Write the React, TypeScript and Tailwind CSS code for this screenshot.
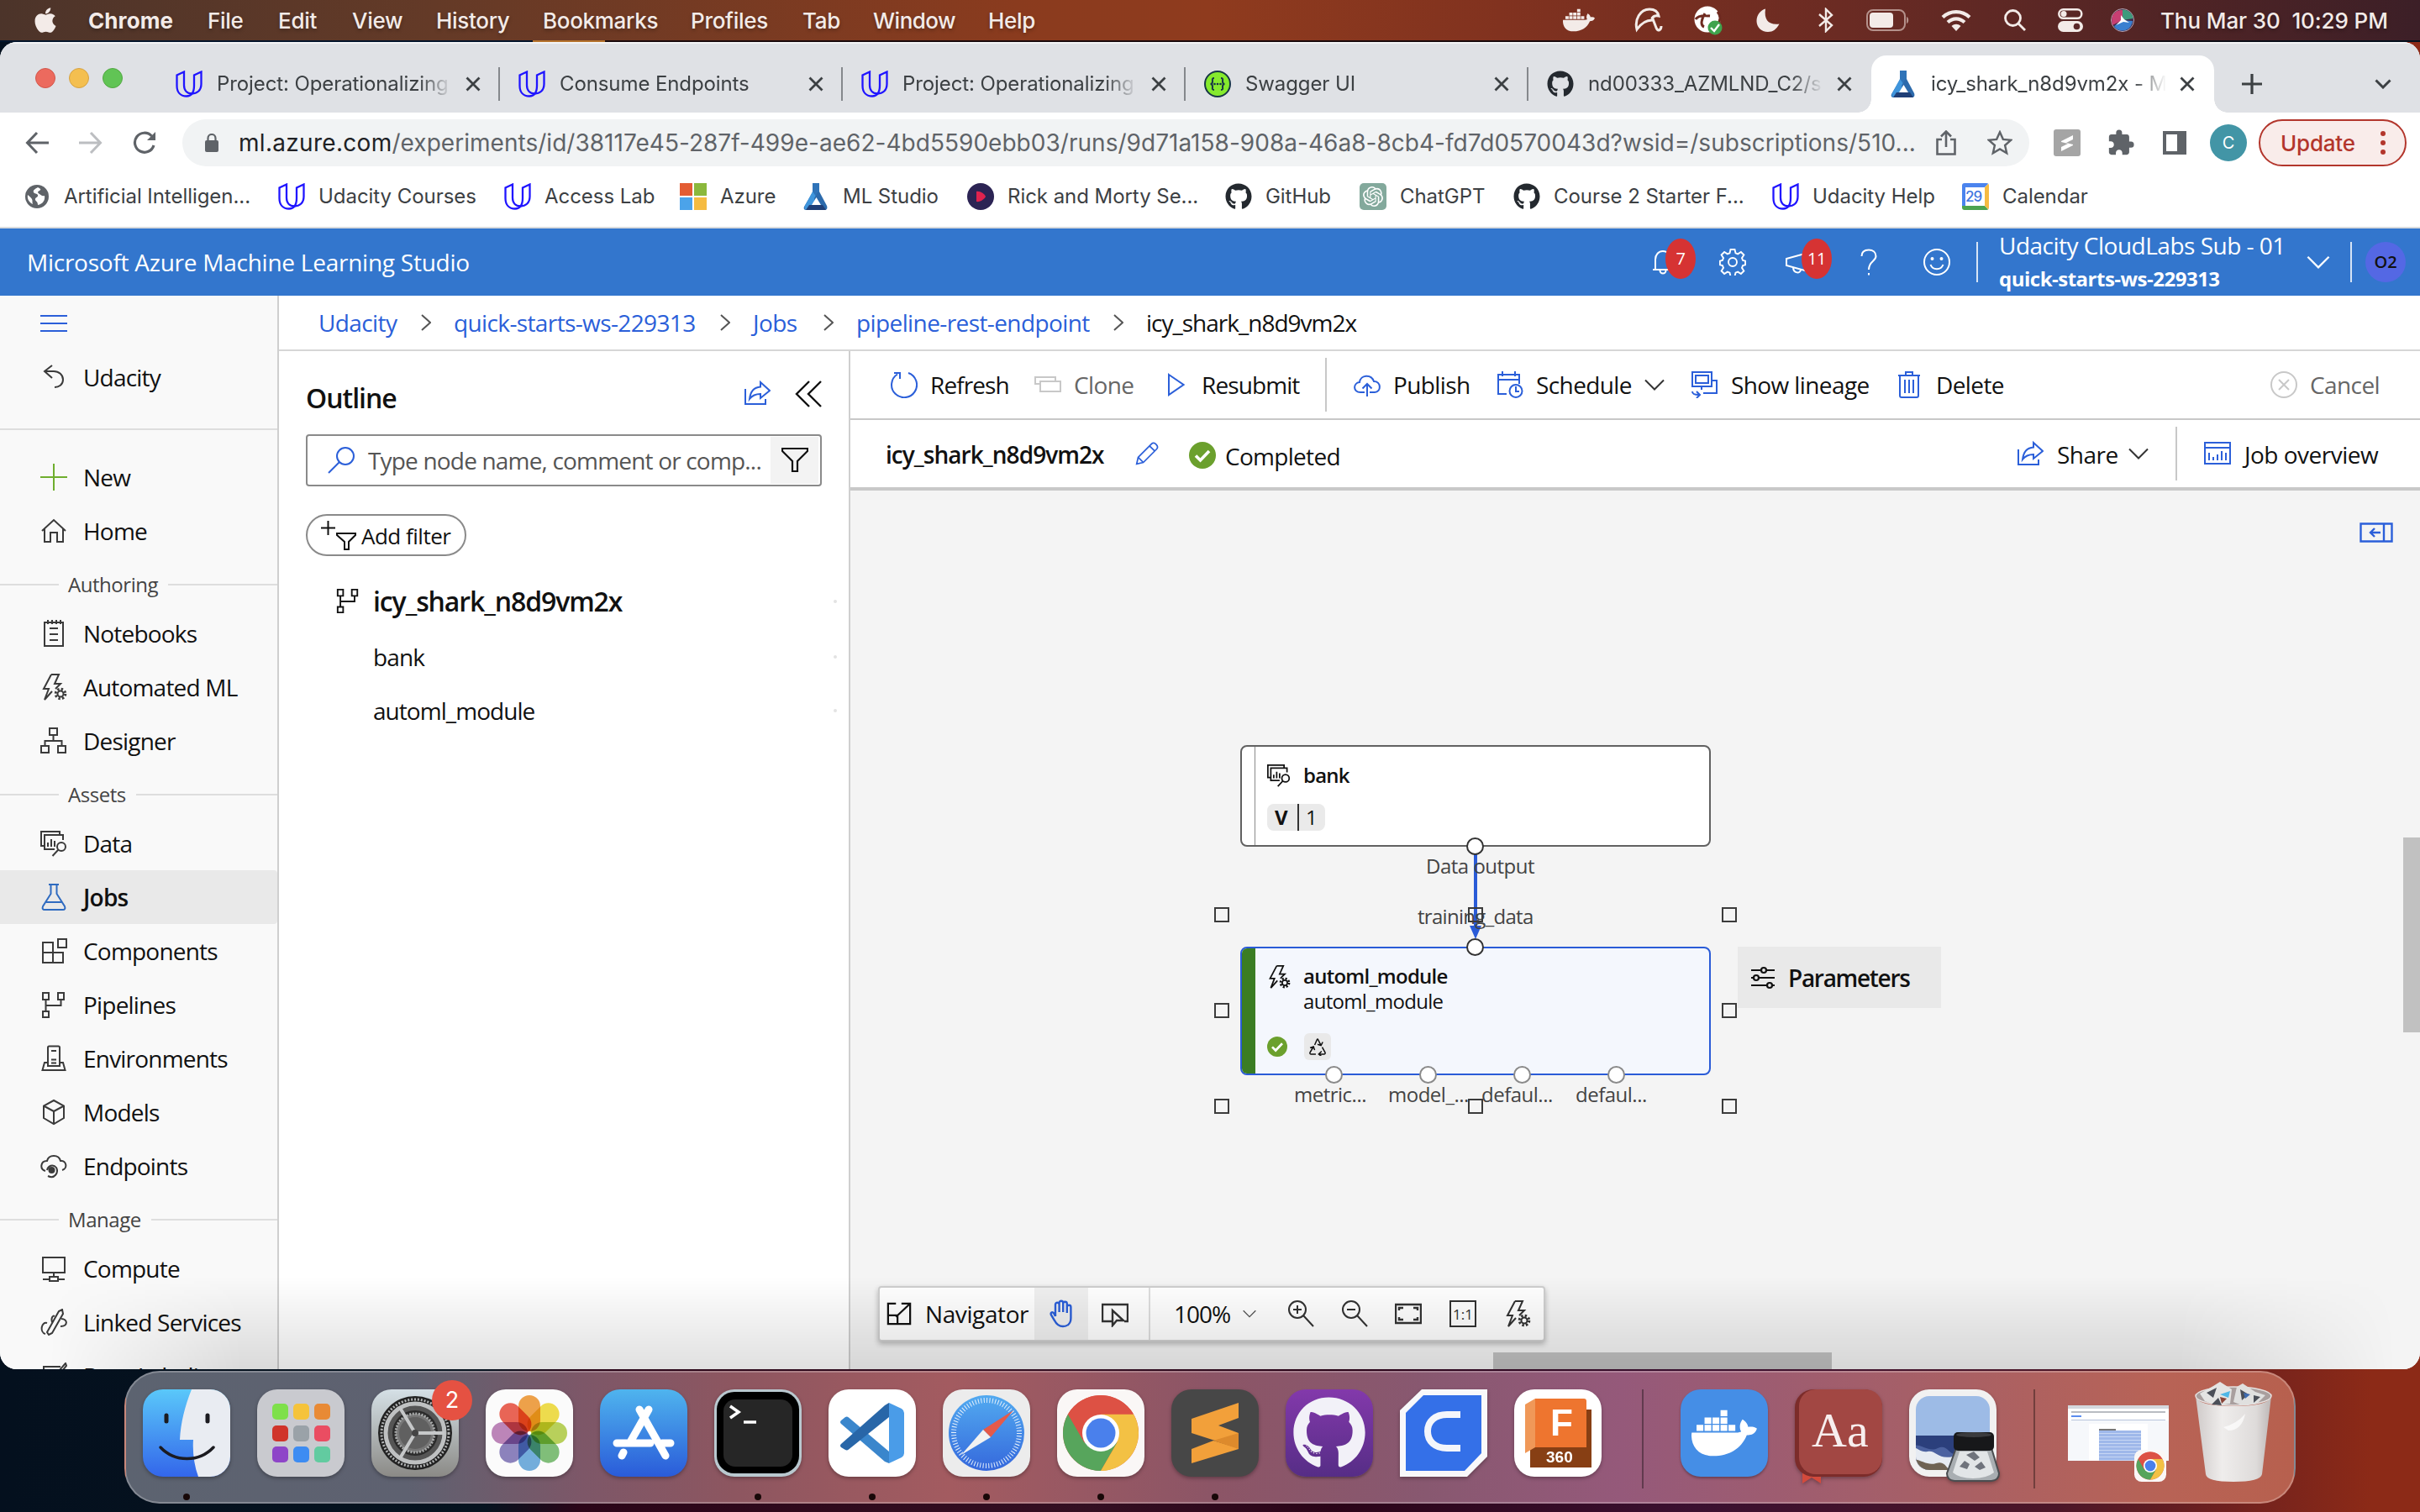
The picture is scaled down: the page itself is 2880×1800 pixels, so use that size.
import React from "react";
import type { ReactNode } from "react";
import { FaApple, FaDocker, FaGithub } from "react-icons/fa";
import { MdExtension } from "react-icons/md";
import { SiOpenai } from "react-icons/si";

type IconProps = { className?: string; children?: ReactNode; vb?: string; sw?: number };

/* Line icon on a 32 px grid that takes its colour from the text colour. */
function Line({ className = "w-8 h-8", children, vb = "0 0 32 32", sw = 2 }: IconProps) {
  return (
    <svg className={"shrink-0 " + className} viewBox={vb} fill="none" stroke="currentColor" strokeWidth={sw}>
      {children}
    </svg>
  );
}

/* ---------- shared glyphs ---------- */

const UdacityMark = ({ className = "w-8 h-8" }: { className?: string }) => (
  <Line className={className + " text-[#2015ff]"} sw={2.3}>
    <path d="M10 1.500L1.500 5.500V18C1.500 26 6 30.500 13 30.500C16 30.500 18 29.500 19.500 27.500C14 27.500 10 24 10 17.500Z" />
    <path d="M30.500 1.500L22 5.500V18C22 22 21 25.500 19.500 27.500C25 27.500 30.500 24 30.500 16Z" />
  </Line>
);

const AzureMl = () => (
  <svg className="h-8 w-8 shrink-0" viewBox="0 0 32 32">
    <path d="M12 0h8v11l-6 7-3 14H4c-2 0-3-2-2-4l10-17z" fill="#2f73b8" />
    <path d="M12 10l-9 17c-1 3 0 5 3 5h3l8-15z" fill="#3f95dc" />
    <path d="M20 10l9 17c1 3 0 5-3 5h-8l-4-14 4-7z" fill="#2c6aac" />
    <path d="M16.500 17l5.500 9H11z" fill="#fff" />
    <path d="M8 26h16l4 6H4z" fill="#1f3f77" />
  </svg>
);

const Swagger = () => (
  <svg className="h-8 w-8 shrink-0" viewBox="0 0 32 32">
    <circle cx="16" cy="16" r="15" fill="#85ea2d" stroke="#173647" strokeWidth="2" />
    <g fill="none" stroke="#173647" strokeWidth="2">
      <path d="M12 9c-3 0-2 2-2 4s-1 3-2.500 3c1.500 0 2.500 1 2.500 3s-1 4 2 4M20 9c3 0 2 2 2 4s1 3 2.500 3c-1.500 0-2.500 1-2.500 3s1 4-2 4" />
    </g>
    <g fill="#173647"><circle cx="12.500" cy="16" r="1.300" /><circle cx="16" cy="16" r="1.300" /><circle cx="19.500" cy="16" r="1.300" /></g>
  </svg>
);

const DataIcon = ({ className = "w-8 h-8" }: { className?: string }) => (
  <Line className={className}>
    <path d="M5 19H1V2H23V6" />
    <path d="M27 12V6H5V23H17" />
    <path d="M9 20V15M13 20V11M17 20V13" />
    <circle cx="25" cy="20" r="5" />
    <path d="M21.500 23.500L14.500 31" />
  </Line>
);

const AutoMlIcon = ({ className = "w-8 h-8" }: { className?: string }) => (
  <Line className={className}>
    <path d="M13 1H22L17 12H24L18 18M13 1L4 18H10L5 31L14 21" />
    <circle cx="24" cy="24" r="3.500" />
    <circle cx="24" cy="24" r="5.800" strokeDasharray="2.400 2.150" strokeWidth="3" />
  </Line>
);

const PipelineIcon = ({ className = "w-8 h-8" }: { className?: string }) => (
  <Line className={className}>
    <path d="M3 2h7v8H3zM21 2h7v8h-7zM3 24h7v7H3zM6.500 10v14M24.500 10v7H6.500" />
  </Line>
);

const ShareIcon = ({ className = "w-8 h-8" }: { className?: string }) => (
  <Line className={className}>
    <path d="M2 11V29H26V23" />
    <path d="M20 3L31 13L20 22V17C14 17 10 19 7 23C8 14 13 9 20 8.500Z" />
  </Line>
);

const Chevron = ({ className = "w-6 h-3.5" }: { className?: string }) => (
  <Line className={className} vb="0 0 24 14">
    <path d="M1 1.500L12 12.500L23 1.500" />
  </Line>
);

const CheckBadge = ({ className }: { className: string }) => (
  <svg className={"shrink-0 " + className} viewBox="0 0 32 32">
    <circle cx="16" cy="16" r="16" fill="#6ba02d" />
    <path d="M8 16.500l5.500 5.500L24 11" fill="none" stroke="#fff" strokeWidth="3.600" />
  </svg>
);

/* ---------- macOS menu bar ---------- */

const menuItems = [
  ["Chrome", "w-[142px] font-bold tracking-[0.1px]"],
  ["File", "w-[84px]"],
  ["Edit", "w-[88px]"],
  ["View", "w-[100px]"],
  ["History", "w-[127px]"],
  ["Bookmarks", "w-[176px]"],
  ["Profiles", "w-[133px]"],
  ["Tab", "w-[84px]"],
  ["Window", "w-[137px] tracking-[-0.5px]"],
  ["Help", "w-[80px]"],
];

function MenuBar() {
  return (
    <header className="flex h-12 shrink-0 items-center bg-[linear-gradient(90deg,#4c342a_0%,#643a27_18%,#8a3b1e_42%,#8f3b1e_50%,#81321f_62%,#6b2b23_76%,#3c1f27_100%)] text-[26px] font-medium tracking-[-0.3px] text-[#f3ebe8] [text-shadow:0_2px_4px_rgba(0,0,0,0.3)]">
      <FaApple className="ml-[37px] mr-[32px] h-[34px] w-[34px]" />
      {menuItems.map(([t, c]) => (
        <span key={t} className={"whitespace-nowrap pl-[2px] " + c}>{t}</span>
      ))}
      <div className="ml-auto flex items-center">
        <FaDocker className="mr-[47px] h-[38px] w-[38px]" />
        <Line className="mr-[36px] h-[30px] w-[34px]" vb="0 0 34 30" sw={3}>
          <path d="M3 26C0 14 7 2 18 2C24 2 28 5 29 10C24 9 21 11 21 15C14 15 8 19 3 26Z" />
          <path d="M21 11L26 24C28 29 32 27 32 22" />
        </Line>
        <svg className="mr-[39px] h-9 w-9" viewBox="0 0 36 36">
          <circle cx="17" cy="17" r="15.500" fill="#fff" />
          <path d="M3 17C5 13 10 12 20 13M14 10C10 17 8 24 13 26M29 8C34 14 32 20 28 24" fill="none" stroke="#6e2a20" strokeWidth="3" />
          <circle cx="26" cy="27" r="8.500" fill="#3fa34d" />
          <path d="M21 27l4 4 6-8" fill="none" stroke="#fff" strokeWidth="2.400" />
        </svg>
        <svg className="mr-[46px] h-7 w-7" viewBox="0 0 28 28"><path d="M11 0.500C9 14 15 20 27.500 18.500C24 25 20 28 14 28C6 28 0.500 22 0.500 15C0.500 8 5 2 11 0.500z" fill="currentColor" /></svg>
        <Line className="mr-[39px] h-[30px] w-[18px]" vb="0 0 18 30" sw={2.4}><path d="M1 8L16 21L9 28V2L16 9L1 22" /></Line>
        <svg className="mr-[38px] h-[26px] w-[51px]" viewBox="0 0 51 26">
          <rect x="1" y="1" width="45" height="24" rx="7" fill="none" stroke="#d6bdb8" strokeWidth="2" opacity=".7" />
          <rect x="4" y="4" width="28" height="18" rx="4" fill="currentColor" />
          <path d="M48 9c3 1 3 7 0 8z" fill="#d6bdb8" opacity=".7" />
        </svg>
        <svg className="mr-[39px] h-[26px] w-9" viewBox="0 0 36 26">
          <g fill="none" stroke="currentColor" strokeWidth="4.200">
            <path d="M2 9.500C11 1 25 1 34 9.500" /><path d="M8 15.500C14 10 22 10 28 15.500" />
          </g>
          <path d="M12.500 20C16 17 20 17 23.500 20L18 26z" fill="currentColor" />
        </svg>
        <Line className="mr-[38px] h-[26px] w-[26px]" vb="0 0 26 26" sw={2.8}><circle cx="10.500" cy="10.500" r="9" /><path d="M17 17l8 8" /></Line>
        <svg className="mr-[33px] h-[28px] w-[30px]" viewBox="0 0 30 28">
          <rect x="1.300" y="1.300" width="27" height="10.500" rx="5.200" fill="none" stroke="currentColor" strokeWidth="2.500" />
          <circle cx="7" cy="6.500" r="3.500" fill="currentColor" />
          <rect x="0" y="15" width="30" height="13" rx="6.500" fill="currentColor" />
          <circle cx="22.500" cy="21.500" r="3.800" fill="#5a2828" />
        </svg>
        <svg className="mr-[31px] h-7 w-7" viewBox="0 0 28 28">
          <circle cx="14" cy="14" r="13.500" fill="#3d2a48" stroke="#b9a3b0" strokeWidth="1" />
          <path d="M14 1.500C21 1.500 26 6 26.500 12L14 14Z" fill="#3f9a7c" />
          <path d="M2 9C5 3 9 2 14 2L14 14L2 20C1 16 1 12 2 9Z" fill="#c73f72" />
          <path d="M4 21L14 14L26 15C25 22 20 26.500 14 26.500C10 26.500 6 25 4 21Z" fill="#3a7fd0" />
          <path d="M12 8L16 13L22 17L15 16L6 20L12 14Z" fill="#fff" />
        </svg>
        <span className="w-[309px] whitespace-pre tracking-[-0.1px]">Thu Mar 30&nbsp; 10:29 PM</span>
      </div>
    </header>
  );
}

/* ---------- Chrome ---------- */

function Tab({ icon, title, active, noSep }: { icon: ReactNode; title: string; active?: boolean; noSep?: boolean }) {
  return (
    <div className={"relative flex h-[68px] w-[408px] items-center pl-[22px] " + (active ? "rounded-t-[18px] bg-white" : "")}>
      <span className="flex w-[49px]">{icon}</span>
      <span className="w-[280px] overflow-hidden whitespace-nowrap text-[24px] tracking-[-0.1px] text-[#3c4043] [mask-image:linear-gradient(90deg,#000_86%,transparent)]">{title}</span>
      <Line className="ml-[16px] h-[18px] w-[18px] text-[#3c4043]" vb="0 0 18 18" sw={2.8}><path d="M1.500 1.500l15 15M16.500 1.500l-15 15" /></Line>
      {!noSep && <span className="ml-auto h-10 w-[2px] bg-[#85888c]" />}
      {active && (
        <>
          <span className="absolute -left-4 bottom-0 h-4 w-4 bg-[radial-gradient(circle_at_0_0,transparent_15.500px,#fff_16px)]" />
          <span className="absolute -right-4 bottom-0 h-4 w-4 bg-[radial-gradient(circle_at_100%_0,transparent_15.500px,#fff_16px)]" />
        </>
      )}
    </div>
  );
}

const GitHub = () => <FaGithub className="h-8 w-8 shrink-0 text-[#24292f]" />;

function TabStrip() {
  return (
    <div className="flex h-[84px] items-end bg-[#dfe1e5] shadow-[inset_0_2px_0_#f3f4f5]">
      <div className="flex w-[187px] items-center gap-4 self-start pl-[42px] pt-[31px]">
        <span className="h-6 w-6 rounded-full border border-[#d2564b] bg-[#ec6a5e]" />
        <span className="h-6 w-6 rounded-full border border-[#d6a243] bg-[#f4bf50]" />
        <span className="h-6 w-6 rounded-full border border-[#52a842] bg-[#61c455]" />
      </div>
      <Tab icon={<UdacityMark />} title="Project: Operationalizing" />
      <Tab icon={<UdacityMark />} title="Consume Endpoints" />
      <Tab icon={<UdacityMark />} title="Project: Operationalizing" />
      <Tab icon={<Swagger />} title="Swagger UI" />
      <Tab icon={<GitHub />} title="nd00333_AZMLND_C2/s" noSep />
      <Tab icon={<AzureMl />} title="icy_shark_n8d9vm2x - M" active noSep />
      <div className="flex h-[68px] flex-1 items-center text-[#3c4043]">
        <Line className="ml-[33px] h-6 w-6" vb="0 0 24 24" sw={3.2}><path d="M12 0v24M0 12h24" /></Line>
        <Line className="ml-[134px] h-3 w-5" vb="0 0 20 12" sw={3}><path d="M1.500 1.500l8.500 8.500 8.500-8.500" /></Line>
      </div>
    </div>
  );
}

function AddressBar() {
  return (
    <div className="flex h-[72px] items-center bg-white text-[#5f6368]">
      <Line className="ml-[30px] h-7 w-7" vb="0 0 28 28" sw={3}><path d="M28 14H3M14 2L2.500 14L14 26" /></Line>
      <Line className="ml-9 h-7 w-7 text-[#bcbec1]" vb="0 0 28 28" sw={3}><path d="M0 14H25M14 2L25.500 14L14 26" /></Line>
      <Line className="ml-9 h-7 w-7" vb="0 0 28 28" sw={3.2}><path d="M25 17A11.500 11.500 0 1 1 22.500 6" /><path d="M27 1V11H17z" fill="currentColor" stroke="none" /></Line>
      <div className="ml-[31px] flex h-14 w-[2198px] items-center rounded-full bg-[#f1f3f4]">
        <svg className="ml-[27px] h-[22px] w-4 shrink-0" viewBox="0 0 16 22"><rect y="8" width="16" height="14" rx="2" fill="currentColor" /><path d="M3.500 9V5.500a4.500 4.500 0 0 1 9 0V9" fill="none" stroke="currentColor" strokeWidth="2.200" /></svg>
        <span className="ml-[24px] w-[2008px] shrink-0 whitespace-nowrap text-[28px] tracking-[0.03px]"><span className="tracking-[0.3px] text-[#202124]">ml.azure.com</span>/experiments/id/38117e45-287f-499e-ae62-4bd5590ebb03/runs/9d71a158-908a-46a8-8cb4-fd7d0570043d?wsid=/subscriptions/510...</span>
        <Line className="ml-[12px] h-[30px] w-6" vb="0 0 24 30" sw={2.6}><path d="M7 11H1.500V28.500H22.500V11H17M12 20V2M6 7.500L12 1.500L18 7.500" /></Line>
        <Line className="ml-[37px] h-[30px] w-[30px]" sw={2.6}><path d="M16 2.500l4.100 9.100 9.900 1-7.500 6.600 2.200 9.800L16 23.900 7.300 29l2.200-9.800L2 12.600l9.900-1z" /></Line>
      </div>
      <svg className="ml-[29px] h-8 w-8" viewBox="0 0 32 32"><rect width="32" height="32" rx="3" fill="#a5a5a5" /><path d="M9 14L23 7V12L15 16L23 18V19L9 26V21L17 17L9 15Z" fill="#fff" /></svg>
      <MdExtension className="ml-[31px] h-[34px] w-[34px]" />
      <Line className="ml-[33px] h-7 w-7" vb="0 0 28 28" sw={4}><path d="M2 2h24v24H2z" /><path d="M21 2v24" strokeWidth="8" /></Line>
      <span className="ml-[28px] flex h-11 w-11 items-center justify-center rounded-full bg-[#4295a6] text-[20px] text-white">C</span>
      <div className="ml-[14px] flex h-14 w-[176px] items-center rounded-full border-2 border-[#b3362c] bg-[#f9ecea] pl-[24px] text-[26px] font-medium tracking-[-0.2px] text-[#b3362c]">
        <span className="w-[119px]">Update</span>
        <svg className="h-7 w-1.5" viewBox="0 0 6 28" fill="currentColor"><circle cx="3" cy="3" r="3" /><circle cx="3" cy="14" r="3" /><circle cx="3" cy="25" r="3" /></svg>
      </div>
    </div>
  );
}

const bookmarks: [string, string, ReactNode][] = [
  ["Artificial Intelligen...", "w-[255px]", <svg className="h-7 w-7" viewBox="0 0 28 28"><circle cx="14" cy="14" r="14" fill="#5f6368" /><path d="M15 3c-3 2-6 3-5 6 1 2 4 1 5 3 1 3-4 3-3 6 1 2 3 2 3 6 6-1 9-6 8-11-3 1-4-1-6-2s-3-3 0-4c2-1 2-2-2-4zM3 12c2 2 4 3 5 5s0 4 1 6c-4-2-7-6-6-11z" fill="#fff" /></svg>],
  ["Udacity Courses", "w-[221px]", <UdacityMark />],
  ["Access Lab", "w-[161px]", <UdacityMark />],
  ["Azure", "w-[98px]", <svg className="h-8 w-8" viewBox="0 0 32 32"><path d="M0 0h15v15H0z" fill="#e35c33" /><path d="M17 0h15v15H17z" fill="#8bb83c" /><path d="M0 17h15v15H0z" fill="#4ba3ea" /><path d="M17 17h15v15H17z" fill="#f5bb41" /></svg>],
  ["ML Studio", "w-[148px]", <AzureMl />],
  ["Rick and Morty Se...", "w-[259px]", <svg className="h-8 w-8" viewBox="0 0 32 32"><circle cx="16" cy="16" r="16" fill="#2c2454" /><path d="M11 10c4-1 10 3 11 6-1 3-7 7-11 6z" fill="#e0234e" /></svg>],
  ["GitHub", "w-[112px]", <GitHub />],
  ["ChatGPT", "w-[135px]", <span className="flex h-8 w-8 items-center justify-center rounded-[5px] bg-[#83a99c] text-white"><SiOpenai className="h-6 w-6" /></span>],
  ["Course 2 Starter F...", "w-[260px]", <GitHub />],
  ["Udacity Help", "w-[178px]", <UdacityMark />],
  ["Calendar", "w-[120px]", <span className="flex h-8 w-8 flex-col overflow-hidden rounded-[3px] border-b-[5px] border-r-[5px] border-t-[5px] border-b-[#4ca350] border-r-[#f5bb41] border-t-[#4b84ee] bg-white pl-1 text-[17px] font-medium leading-[22px] tracking-[-1px] text-[#3f76e0] shadow-[inset_4px_0_0_#4b84ee]">29</span>],
];

function Bookmarks() {
  return (
    <div className="flex h-[66px] items-center border-b-2 border-[#d9dbde] bg-white pb-2 pl-[28px] text-[24px] tracking-[-0.05px] text-[#3c4043]">
      {bookmarks.map(([t, w, icon]) => (
        <div key={t} className="flex items-center">
          <span className="mr-4 flex w-8 justify-center">{icon}</span>
          <span className={"whitespace-nowrap " + w}>{t}</span>
        </div>
      ))}
    </div>
  );
}

/* ---------- Azure ML header ---------- */

function Badge({ children }: { children: ReactNode }) {
  return <span className="absolute -top-9 left-[19px] flex h-12 w-9 items-center justify-center rounded-[50%] bg-[#d63333] text-[20px] tracking-[-0.5px]">{children}</span>;
}

function StudioHeader() {
  return (
    <div className="flex h-20 items-center bg-[#3376cd] pl-[32px] font-[Open_Sans,Noto_Sans,sans-serif] text-[28px] text-white">
      <span className="w-[1931px] whitespace-nowrap tracking-[-0.25px]">Microsoft Azure Machine Learning Studio</span>
      <span className="relative mr-[51px] flex h-8 w-8 items-center">
        <Line><path d="M4 25H28M7 25V13C7 7 11 3 16 3S25 7 25 13V25M12.500 26a3.500 3.500 0 0 0 7 0" /></Line>
        <span className="absolute left-0 top-6"><Badge>7</Badge></span>
      </span>
      <Line className="h-8 w-8" sw={1.9}>
        <circle cx="16" cy="16" r="5" />
        <path d="M13.500 1h5l1 4.300 2.700 1.100 3.700-2.400 3.500 3.500-2.400 3.700 1.100 2.700 3 .800v4.600l-3 .800-1.100 2.700 2.400 3.700-3.500 3.500-3.700-2.400-2.700 1.100-1 4.300h-5l-1-4.300-2.700-1.100-3.700 2.400-3.500-3.500 2.400-3.700-1.100-2.700-3-.800v-4.600l3-.800 1.100-2.700-2.400-3.700 3.500-3.500 3.700 2.400 2.700-1.100z" />
      </Line>
      <span className="relative ml-[47px] flex h-8 w-8 items-center">
        <Line><path d="M1 12L30 4V28L1 20ZM9 22C9 30 18 30 18 25" /></Line>
        <span className="absolute left-0 top-6"><Badge>11</Badge></span>
      </span>
      <Line className="ml-[57px] h-8 w-5" vb="0 0 20 32"><path d="M1.500 9C1.500 4 5 1.500 10 1.500S18.500 4.500 18.500 9C18.500 15 10 15 10 25M10 29v2.500" /></Line>
      <Line className="ml-[55px] h-8 w-8"><circle cx="16" cy="16" r="15" /><path d="M8.500 19a8 8 0 0 0 15 0" /><circle cx="10.500" cy="12" r="1" fill="currentColor" /><circle cx="21.500" cy="12" r="1" fill="currentColor" /></Line>
      <span className="ml-[31px] h-12 w-[2px] bg-white/80" />
      <div className="ml-[25px] flex w-[366px] flex-col">
        <span className="whitespace-nowrap text-[28px] leading-[38px] tracking-[-0.5px]">Udacity CloudLabs Sub - 01</span>
        <span className="whitespace-nowrap pt-0.5 text-[24px] font-bold leading-[38px] tracking-[-0.5px]">quick-starts-ws-229313</span>
      </div>
      <Chevron className="h-4 w-7" />
      <span className="ml-[24px] h-12 w-[2px] bg-white/80" />
      <span className="ml-[16px] flex h-12 w-12 shrink-0 items-center justify-center rounded-full bg-[#5468e4] text-[20px] font-semibold text-[#111]">O2</span>
    </div>
  );
}

/* ---------- sidebar ---------- */

function NavItem({ icon, label, active }: { icon: ReactNode; label: string; active?: boolean }) {
  return (
    <div className={"flex h-16 shrink-0 items-center pl-12 " + (active ? "rounded-r-[4px] bg-[#e9e9e9] font-semibold" : "")}>
      <span className={"mr-[19px] flex w-8 justify-center " + (active ? "text-[#2f6bc0]" : "text-[#3b3b3b]")}>{icon}</span>
      <span className="whitespace-nowrap tracking-[-0.8px]">{label}</span>
    </div>
  );
}

function NavGroup({ label }: { label: string }) {
  return (
    <div className="flex h-[58px] shrink-0 items-center pt-1.5 text-[24px] tracking-[-0.45px] text-[#444]">
      <span className="mr-[11px] h-[2px] w-[70px] bg-[#dedede]" />
      {label}
      <span className="ml-3 h-[2px] flex-1 bg-[#dedede]" />
    </div>
  );
}

function Sidebar() {
  return (
    <nav className="flex w-[332px] shrink-0 flex-col overflow-hidden border-r-2 border-[#cfcfcf] bg-[#f9f9f9] text-[28px] text-[#111]">
      <div className="flex h-[65px] shrink-0 flex-col justify-center gap-[7px] pl-12">
        <span className="h-[2px] w-8 bg-[#2b5fd9]" />
        <span className="h-[2px] w-8 bg-[#2b5fd9]" />
        <span className="h-[2px] w-8 bg-[#2b5fd9]" />
      </div>
      <NavItem label="Udacity" icon={<Line><path d="M14 2L5 9L14 17M5 9H16C22 9 27 13 27 19S22 28 17 28" /></Line>} />
      <div className="h-[31px] shrink-0 border-b-2 border-[#dedede]" />
      <div className="h-6 shrink-0" />
      <NavItem label="New" icon={<Line className="h-8 w-8 text-[#6fae2e]"><path d="M16 0V32M0 16H32" /></Line>} />
      <NavItem label="Home" icon={<Line><path d="M2 16L16 3L30 16M5 13.500V29H12V18H20V29H27V13.500" /></Line>} />
      <NavGroup label="Authoring" />
      <NavItem label="Notebooks" icon={<Line><path d="M5 3H27V31H5ZM9 0V5M14 0V5M19 0V5M24 0V5M11 10H21M11 17H21M11 24H21" /></Line>} />
      <NavItem label="Automated ML" icon={<AutoMlIcon />} />
      <NavItem label="Designer" icon={<Line><path d="M11 1h9v8h-9zM1 22h9v8H1zM21 22h9v8h-9zM15.500 9v7M5.500 22v-6h20v6" /></Line>} />
      <NavGroup label="Assets" />
      <NavItem label="Data" icon={<DataIcon />} />
      <NavItem active label="Jobs" icon={<Line><path d="M10 1H22M12.500 1V12L3 27C2 29.500 3 31 5 31H27C29 31 30 29.500 29 27L19.500 12V1M7 22H25" /></Line>} />
      <NavItem label="Components" icon={<Line><path d="M3 6h12v24H3zM3 18h24v12H15V18M21 2h10v10H21z" /></Line>} />
      <NavItem label="Pipelines" icon={<PipelineIcon />} />
      <NavItem label="Environments" icon={<Line><path d="M9 25V3Q9 1.500 10.500 1.500H21.500Q23 1.500 23 3V25ZM13 7H19M13 17.500H19M13 21.500H19M9 21H5L2.500 30H29.500L27 21H23" /></Line>} />
      <NavItem label="Models" icon={<Line><path d="M16 2L28 8.500V23L16 30L4 23V8.500ZM4 8.500L16 15L28 8.500M16 15V30" /></Line>} />
      <NavItem label="Endpoints" icon={<Line><path d="M6 22C-1 20 0 10 8 10C10 2 22 2 24 10C31 9 33 19 26 21M9 28C17 32 22 24 19 18C15 13 9 16 8 21" /><circle cx="13.500" cy="21" r="3" fill="currentColor" /></Line>} />
      <NavGroup label="Manage" />
      <NavItem label="Compute" icon={<Line><path d="M3 3H29V21H3ZM16 21V26M3 29H10M22 29H29M11 26h10v5H11z" /></Line>} />
      <NavItem label="Linked Services" icon={<Line><path d="M10 31L8 28L22 3L26 1L27 6L14 29ZM8 17C1 15-1 28 6 30M17 9C14 7 12 14 15 17M25 12C33 12 33 21 24 21" /></Line>} />
      <NavItem label="Data Labeling" icon={<Line><path d="M24 5H4V29H28V14M30 1L14 19L11 24L17 21L31 4Z" /></Line>} />
    </nav>
  );
}

/* ---------- breadcrumb + outline ---------- */

const Sep = () => <Line className="h-5 w-3 text-[#555]" vb="0 0 12 20"><path d="M1 1l10 9-10 9" /></Line>;

function Breadcrumb() {
  return (
    <div className="flex h-[66px] items-center border-b-2 border-[#d6d6d6] pl-[47px] text-[28px] tracking-[-0.6px] text-[#2b5fd9]">
      <span className="w-[122px]">Udacity</span><Sep />
      <span className="ml-[27px] w-[317px] whitespace-nowrap tracking-[-0.62px]">quick-starts-ws-229313</span><Sep />
      <span className="ml-[27px] w-[84px]">Jobs</span><Sep />
      <span className="ml-[27px] w-[306px] whitespace-nowrap">pipeline-rest-endpoint</span><Sep />
      <span className="ml-[27px] whitespace-nowrap tracking-[-1px] text-[#111]">icy_shark_n8d9vm2x</span>
    </div>
  );
}

function Outline() {
  return (
    <section className="flex w-[680px] shrink-0 flex-col border-r-2 border-[#cfcfcf] bg-white text-[28px] text-[#111]">
      <div className="mt-[23px] flex h-[62px] items-center pl-8">
        <span className="w-[521px] pt-1 text-[32px] font-semibold tracking-[-1px]">Outline</span>
        <ShareIcon className="mb-2 h-8 w-8 text-[#2b5fd9]" />
        <Line className="mb-1.5 ml-[29px] h-8 w-8" sw={2.4}><path d="M17 1L2 16L17 31M31 1L16 16L31 31" /></Line>
      </div>
      <div className="ml-8 mt-[14px] flex h-[62px] w-[614px] items-center rounded-[4px] border-2 border-[#8a8a8a]">
        <Line className="ml-6 h-8 w-8 text-[#2b5fd9]"><circle cx="21" cy="11" r="10" /><path d="M14 18L1 31" /></Line>
        <span className="ml-4 w-[479px] whitespace-nowrap tracking-[-0.82px] text-[#555]">Type node name, comment or comp...</span>
        <span className="flex h-[56px] w-[57px] items-center justify-center bg-[#f3f3f3]">
          <Line className="h-8 w-8" sw={2.2}><path d="M1 2H31V5L19 17V29H13V17L1 5Z" /></Line>
        </span>
      </div>
      <div className="ml-8 mt-[33px] flex h-[50px] w-[191px] items-center rounded-full border-2 border-[#8a8a8a] pl-4">
        <Line className="h-9 w-[42px]" vb="0 0 42 36"><path d="M8.500 1V18M0 9.500H17M19 16H41V18L33 26V35H28V26L19 18Z" /></Line>
        <span className="ml-[6px] whitespace-nowrap pt-0.5 text-[26px] tracking-[-0.5px]">Add filter</span>
      </div>
      <div className="mt-[20px] flex h-[68px] items-center pl-[67px] pr-[14px]">
        <PipelineIcon className="mb-0.5 h-[30px] w-[30px]" />
        <span className="ml-[15px] whitespace-nowrap text-[32px] font-semibold tracking-[-1.1px]">icy_shark_n8d9vm2x</span>
        <span className="ml-auto h-1 w-1 rounded-full bg-[#e3e3e3]" />
      </div>
      <div className="flex h-16 items-center pl-[112px] pr-[14px] tracking-[-0.9px]">bank<span className="ml-auto h-1 w-1 rounded-full bg-[#e3e3e3]" /></div>
      <div className="flex h-16 items-center pl-[112px] pr-[14px] tracking-[-0.95px]">automl_module<span className="ml-auto h-1 w-1 rounded-full bg-[#e3e3e3]" /></div>
    </section>
  );
}

/* ---------- job tool bars ---------- */

function CommandBar() {
  return (
    <div className="flex h-[82px] items-center whitespace-nowrap border-b-2 border-[#c8c8c8] bg-white pl-12 text-[28px] tracking-[-0.6px] text-[#111] [&>svg]:text-[#2b5fd9]">
      <Line><path d="M21 2A15 15 0 1 1 8 3.500M4 2H11V9" /></Line>
      <span className="ml-[15px] w-[124px] tracking-[-0.9px]">Refresh</span>
      <Line className="h-8 w-8 text-[#c8c8c8]!"><path d="M7 15H1V7H25V12M7 12H31V24H7Z" /></Line>
      <span className="ml-[15px] w-[112px] text-[#666]">Clone</span>
      <Line className="h-7 w-5" vb="0 0 20 28"><path d="M1 2L18.500 14L1 26Z" /></Line>
      <span className="ml-[20px] w-[147px] tracking-[-0.9px]">Resubmit</span>
      <span className="h-16 w-[2px] bg-[#c8c8c8]" />
      <Line className="ml-8 h-8 w-8"><path d="M13 25H8C-1 25-1 14 7 13C8 4 21 3 24 12C33 12 33 25 25 25H19M16 30V15M10.500 20.500L16 15L21.500 20.500" /></Line>
      <span className="ml-[15px] w-[123px]">Publish</span>
      <Line><path d="M12 27H2V4H27V15M2 10H27M7 0V6M22 0V6" /><circle cx="23" cy="23.500" r="7.500" /><path d="M23 18V24H27" /></Line>
      <span className="ml-[15px] w-[129px]">Schedule</span>
      <Chevron className="h-3.5 w-6 text-[#333]!" />
      <Line className="ml-[31px] h-8 w-8"><path d="M2 1H25V18H2ZM6 5H21V14H6ZM25 11H31V26H15M13 18V22M2 24C2 27 4 28 10 28M7 24L11 28L7 32" /></Line>
      <span className="ml-[16px] w-[196px]">Show lineage</span>
      <Line className="h-8 w-8"><path d="M3 5H29M12 5V1H20V5M5 5V29Q5 31 7 31H25Q27 31 27 29V5M11 10V26M16 10V26M21 10V26" /></Line>
      <span className="ml-[16px]">Delete</span>
      <Line className="ml-auto h-8 w-8 text-[#c8c8c8]!"><circle cx="16" cy="16" r="15" /><path d="M10 10L22 22M22 10L10 22" /></Line>
      <span className="ml-[15px] w-[131px] text-[#666]">Cancel</span>
    </div>
  );
}

function TitleBar() {
  return (
    <div className="flex h-[84px] items-center whitespace-nowrap border-b-4 border-[#c8c8c8] bg-white pl-[42px] text-[28px] tracking-[-0.5px] text-[#111]">
      <span className="w-[297px] pt-0.5 font-semibold tracking-[-0.95px]">icy_shark_n8d9vm2x</span>
      <Line className="h-7 w-7 text-[#2b5fd9]"><path d="M2 30L4 21L22 3Q25 0 28.500 3.500T29 10L11 28ZM4 21L11 28M19.500 5.500L26.500 12.500" /></Line>
      <CheckBadge className="ml-[36px] mt-1 h-8 w-8" />
      <span className="ml-[11px] pt-1.5 tracking-[-0.7px]">Completed</span>
      <ShareIcon className="ml-auto h-8 w-8 text-[#2b5fd9]" />
      <span className="ml-[16px] w-[85px] pt-0.5">Share</span>
      <Chevron className="h-3.5 w-6 text-[#333]" />
      <span className="ml-[32px] h-16 w-[2px] bg-[#c8c8c8]" />
      <Line className="ml-8 h-8 w-8 text-[#2b5fd9]"><path d="M1 3H31V28H1ZM1 9H31M6 24V15M11 24V20M16 24V17M21 24V13M26 24V15" /></Line>
      <span className="ml-[16px] w-[209px] pt-0.5">Job overview</span>
    </div>
  );
}

/* ---------- graph canvas ---------- */

const handles = [
  "left-[433px] top-[496px]", "left-[735px] top-[496px]", "left-[1037px] top-[496px]",
  "left-[433px] top-[610px]", "left-[1037px] top-[610px]",
  "left-[433px] top-[724px]", "left-[735px] top-[724px]", "left-[1037px] top-[724px]",
];

const outputs = [
  ["metric...", "left-[565px]", "left-[528px]"],
  ["model_...", "left-[677px]", "left-[640px]"],
  ["defaul...", "left-[789px]", "left-[751px]"],
  ["defaul...", "left-[901px]", "left-[863px]"],
];

function Canvas() {
  return (
    <div className="relative flex-1 overflow-hidden bg-[#f4f4f4] text-[#111]">
      <Line className="absolute left-[1796px] top-[38px] h-6 w-10 text-[#2b5fd9]" vb="0 0 40 24" sw={2.4}>
        <path d="M1.500 1.500H38.500V22.500H1.500ZM29 1.500V22.500M25 12H13M18 7L13 12L18 17" />
      </Line>

      <span className="absolute left-[742px] top-[433px] h-[90px] w-1 bg-[#2a5bd7]" />
      <svg className="absolute left-[737px] top-[518px] h-4 w-3.5" viewBox="0 0 14 16"><path d="M0 0h14L7 16z" fill="#2a5bd7" /></svg>

      <article className="absolute left-[464px] top-[303px] flex h-[121px] w-[560px] rounded-[8px] border-2 border-[#616161] bg-white">
        <span className="w-4 border-r-[1.5px] border-[#8a8a8a]" />
        <div className="flex flex-col pl-[14px]">
          <div className="mt-[17px] flex h-[34px] items-center text-[24px] font-semibold tracking-[-0.8px]">
            <DataIcon className="h-7 w-7" /><span className="ml-[15px]">bank</span>
          </div>
          <div className="mt-[17px] flex h-8 w-[69px] items-center rounded-[8px] bg-[#eaeaea] text-[24px]">
            <span className="w-[36px] pl-[9px] font-bold">V</span>
            <span className="h-8 w-[2px] bg-[#333]" />
            <span className="pl-[8px]">1</span>
          </div>
        </div>
      </article>
      <span className="absolute left-[685px] top-[430px] whitespace-nowrap text-[24px] leading-[33px] tracking-[-0.5px] text-[#444]">Data output</span>
      <span className="absolute left-[675px] top-[490px] whitespace-nowrap text-[24px] leading-[33px] tracking-[-0.7px] text-[#444]">training_data</span>
      <span className="absolute left-[733px] top-[413px] h-[21px] w-[21px] rounded-full border-2 border-[#333] bg-white" />

      <article className="absolute left-[464px] top-[543px] flex h-[153px] w-[560px] overflow-hidden rounded-[8px] border-2 border-[#2a5bd7] bg-[#f4f7fd]">
        <span className="w-4 bg-[#3b7d23]" />
        <div className="flex flex-col pl-[14px]">
          <div className="mt-[18px] flex items-start text-[24px] leading-[30px]">
            <AutoMlIcon className="mt-[2px] h-7 w-7" />
            <div className="ml-[15px] flex flex-col">
              <span className="font-semibold tracking-[-0.75px]">automl_module</span>
              <span className="tracking-[-0.7px]">automl_module</span>
            </div>
          </div>
          <div className="mt-[23px] flex items-center">
            <CheckBadge className="h-6 w-6" />
            <span className="ml-5 flex h-8 w-8 items-center justify-center rounded-[6px] bg-[#e9e9e9]">
              <Line className="h-[22px] w-[22px]" sw={2.2}><path d="M11 13L15 4Q16 2 17 4L22 14M25 8L22 14L16 12M24 17L29 26Q30 29 27 29H19M23 24L18 29L23 33M13 29H5Q2 29 3 26L9 16M3 18L9 16L11 22" /></Line>
            </span>
          </div>
        </div>
      </article>
      <span className="absolute left-[733px] top-[533px] h-[21px] w-[21px] rounded-full border-2 border-[#333] bg-white" />
      {outputs.map(([label, port, text], i) => (
        <React.Fragment key={i}>
          <span className={"absolute top-[685px] h-[21px] w-[21px] rounded-full border-2 border-[#8a8a8a] bg-white " + port} />
          <span className={"absolute top-[702px] whitespace-nowrap text-[24px] leading-[33px] tracking-[-0.5px] text-[#444] " + text}>{label}</span>
        </React.Fragment>
      ))}
      {handles.map((h) => (
        <span key={h} className={"absolute h-[18px] w-[18px] border-2 border-[#3b3b3b] " + h} />
      ))}

      <div className="absolute left-[1056px] top-[543px] flex h-[73px] w-[242px] items-center bg-[#e9e9e9] pl-4 text-[28px] font-semibold tracking-[-1.5px]">
        <Line className="h-7 w-7" vb="0 0 28 28" sw={2.2}><path d="M0 5H12M18 5H28M0 14H3M9 14H28M0 23H19M25 23H28" /><circle cx="15" cy="5" r="3" /><circle cx="6" cy="14" r="3" /><circle cx="22" cy="23" r="3" /></Line>
        <span className="ml-[16px] tracking-[-1.3px]">Parameters</span>
      </div>

      <span className="absolute left-[1848px] top-[413px] h-[232px] w-5 bg-[#c1c1c1]" />
      <span className="absolute bottom-0 left-[765px] h-5 w-[403px] bg-[#c1c1c1]" />

      <div className="absolute left-[33px] top-[947px] flex h-[66px] w-[794px] items-center rounded-[4px] border-2 border-[#cfcfcf] bg-white text-[28px] shadow-[0_3px_6px_rgba(0,0,0,0.25)]">
        <Line className="ml-[8px] h-[30px] w-[30px]" sw={2.4}><path d="M12 3H2V29H30V12M2 18H14V29M19 3H30V12M12 20L29 4" /></Line>
        <span className="ml-[16px] w-[130px] tracking-[-0.4px]">Navigator</span>
        <span className="flex h-[62px] w-16 items-center justify-center bg-[#f0f0f0]">
          <Line className="h-[34px] w-[30px] text-[#2b5fd9]" vb="0 0 30 34" sw={2.4}><path d="M8 20V6a2.300 2.300 0 0 1 4.600 0V15M12.600 15V4a2.300 2.300 0 0 1 4.600 0V15M17.200 15V5a2.300 2.300 0 0 1 4.600 0V16M21.800 16V9a2.300 2.300 0 0 1 4.600 0V22C26.400 29 22 32 17 32C12 32 9 29 7 25L3 18.500C1.500 15 5 14 6.500 17L8 20" /></Line>
        </span>
        <Line className="ml-4 h-8 w-8 text-[#333]" sw={2.4}><path d="M12 25H1V5H31V25H27M13 12V30L18 24H26Z" /></Line>
        <span className="ml-[24px] h-[62px] w-[2px] bg-[#dedede]" />
        <span className="ml-[28px] w-[82px] tracking-[-1px]">100%</span>
        <Chevron className="h-2.5 w-4 text-[#555]" />
        <Line className="ml-[37px] h-8 w-8 text-[#333]"><circle cx="12" cy="11" r="10" /><path d="M19 18L31 31M12 6V16M7 11H17" /></Line>
        <Line className="ml-[32px] h-8 w-8 text-[#333]"><circle cx="12" cy="11" r="10" /><path d="M19 18L31 31M7 11H17" /></Line>
        <Line className="ml-[32px] h-8 w-8 text-[#333]" sw={2.4}><path d="M1 5H31V27H1ZM5 12V9H10M22 9H27V12M5 20V23H10M22 23H27V20" /></Line>
        <span className="ml-[33px] flex h-8 w-8 items-center justify-center border-2 border-[#333] text-[17px] leading-none text-[#333]">1:1</span>
        <AutoMlIcon className="ml-[33px] h-8 w-8 text-[#333]" />
      </div>
    </div>
  );
}

/* ---------- dock ---------- */

const Tile = ({ children, dot }: { children: ReactNode; dot?: boolean }) => (
  <div className="relative flex h-[136px] w-[104px] shrink-0 flex-col items-center">
    {children}
    {dot && <span className="mt-[20px] h-2 w-2 rounded-full bg-[#180808]" />}
  </div>
);

const App104 = ({ children }: { children: ReactNode }) => (
  <svg className="h-[104px] w-[104px] shrink-0 overflow-visible drop-shadow-[0_2px_2px_rgba(0,0,0,0.3)]" viewBox="0 0 104 104">{children}</svg>
);

const ChromeLogo = ({ cx = 52, cy = 52, s = 1 }: { cx?: number; cy?: number; s?: number }) => (
  <g transform={`translate(${cx} ${cy}) scale(${s})`}>
    <circle r="45" fill="#dd5144" />
    <path d="M-39-22.500A45 45 0 0 0 0 45L19.500 11.300L-19.500 11.300Z" fill="#57a55c" />
    <path d="M39-22.500A45 45 0 0 1 0 45L19.500 11.300L0-22.500Z" fill="#f3c144" />
    <path d="M-39-22.500L-19.500 11.300L0-22.500H39A45 45 0 0 0-39-22.500Z" fill="#dd5144" />
    <circle r="22" fill="#fff" />
    <circle r="17.500" fill="#4a80ec" />
  </g>
);

const petals: [number, string][] = [
  [0, "#f09a37"], [45, "#f0dc3a"], [90, "#b4d04a"], [135, "#74ba6c"],
  [180, "#66a8dc"], [225, "#8276b8"], [270, "#b87ab4"], [315, "#ea5545"],
];

const pads: [number, number, string][] = [
  [18, 17, "#7ee04a"], [43, 17, "#f5c33b"], [68, 17, "#e88a35"],
  [18, 43, "#d0342a"], [43, 43, "#9aa2a8"], [68, 43, "#ea4d62"],
  [18, 68, "#8e45c8"], [43, 68, "#3d8cf2"], [68, 68, "#62cba0"],
];

function Dock() {
  return (
    <div className="ml-[148px] mt-[2px] flex h-[158px] w-[2584px] shrink-0 items-start rounded-[42px] border-2 border-white/25 bg-[linear-gradient(90deg,#5c6370_0%,#5e6170_13%,#7d5768_21%,#8d5660_28%,#a35b60_38%,#8c5566_50%,#885870_60%,#95597a_69%,#a55f68_82%,#b86356_94%,#b7604e_100%)] pl-5 pt-5">
      <div className="flex gap-8">
        <Tile dot>
          <App104>
            <defs>
              <linearGradient id="fb" x1="0" y1="0" x2="0" y2="1"><stop offset="0" stopColor="#5ac8fa" /><stop offset="1" stopColor="#3366ea" /></linearGradient>
              <clipPath id="sq"><rect width="104" height="104" rx="24" /></clipPath>
            </defs>
            <g clipPath="url(#sq)">
              <rect width="104" height="104" fill="url(#fb)" />
              <path d="M58 0C50 20 45 40 44 60H60C59 75 61 90 66 104H104V0Z" fill="#e9ecf2" />
            </g>
            <path d="M28 31V38M77 31V38" stroke="#1b1b20" strokeWidth="5" strokeLinecap="round" />
            <path d="M21 69C38 87 67 87 84 69" fill="none" stroke="#1b1b20" strokeWidth="3.500" strokeLinecap="round" />
          </App104>
        </Tile>
        <Tile>
          <App104>
            <rect width="104" height="104" rx="24" fill="#c9cacf" />
            {pads.map(([x, y, c]) => <rect key={c} x={x} y={y} width="19" height="19" rx="5" fill={c} />)}
          </App104>
        </Tile>
        <Tile>
          <App104>
            <defs><linearGradient id="sg" x1="0" y1="0" x2="0" y2="1"><stop offset="0" stopColor="#d5e0e6" /><stop offset="1" stopColor="#8b8a86" /></linearGradient></defs>
            <rect width="104" height="104" rx="24" fill="url(#sg)" />
            <circle cx="52" cy="52" r="44" fill="#222" />
            <circle cx="52" cy="52" r="40" fill="none" stroke="#b0b2b3" strokeWidth="3" strokeDasharray="2 1.900" />
            <circle cx="52" cy="52" r="35" fill="#555" stroke="#bfc1c2" strokeWidth="5" />
            <circle cx="52" cy="52" r="25" fill="#777" stroke="#2b2b2b" strokeWidth="4" />
            <circle cx="52" cy="52" r="23" fill="none" stroke="#a9abab" strokeWidth="3" strokeDasharray="2 1.600" />
            <circle cx="52" cy="52" r="19" fill="#606060" />
            <path d="M52 52H87M52 52L34 22M52 52L34 82" stroke="#c6c8c9" strokeWidth="4" />
            <circle cx="52" cy="52" r="4" fill="#444" />
          </App104>
          <span className="absolute -right-4 -top-[11px] flex h-12 w-12 items-center justify-center rounded-full bg-[#e55142] text-[27px] text-white">2</span>
        </Tile>
        <Tile>
          <App104>
            <rect width="104" height="104" rx="24" fill="#fbfbfb" />
            {petals.map(([a, c]) => (
              <rect key={a} x="39" y="7" width="26" height="43" rx="13" fill={c} opacity=".9" transform={`rotate(${a} 52 52)`} className="mix-blend-multiply" />
            ))}
          </App104>
        </Tile>
        <Tile>
          <App104>
            <defs><linearGradient id="as" x1="0" y1="0" x2="0" y2="1"><stop offset="0" stopColor="#4fb4ee" /><stop offset="1" stopColor="#2a5bd9" /></linearGradient></defs>
            <rect width="104" height="104" rx="24" fill="url(#as)" />
            <g stroke="#fff" strokeWidth="9" strokeLinecap="round">
              <path d="M58 24L37 61M47 24L78 79M20 64H60M74 64H84M28 75L26 79" />
            </g>
          </App104>
        </Tile>
        <Tile dot>
          <App104>
            <rect width="104" height="104" rx="24" fill="#b9c8cf" />
            <rect x="3" y="3" width="98" height="97" rx="21" fill="#000" />
            <rect x="11" y="12" width="82" height="80" rx="14" fill="#262626" />
            <path d="M19 20L29 27L19 34" fill="none" stroke="#fff" strokeWidth="3.500" />
            <path d="M35 39H50" stroke="#fff" strokeWidth="3.500" />
          </App104>
        </Tile>
        <Tile dot>
          <App104>
            <rect width="104" height="104" rx="24" fill="#fff" />
            <path d="M15 37L20 33Q22 32 24 33.500L72 74V88L67 86L15 41Q13 39 15 37Z" fill="#3a86cc" />
            <path d="M15 65Q13 67 15 69L20 72Q22 73 24 71.500L72 33V16L67 19Z" fill="#2866a8" />
            <path d="M72 16L87 23Q90 25 90 28V76Q90 79 87 81L72 88Z" fill="#4a9ce8" />
          </App104>
        </Tile>
        <Tile dot>
          <App104>
            <defs><linearGradient id="sf" x1="0" y1="0" x2="0" y2="1"><stop offset="0" stopColor="#52aaf0" /><stop offset="1" stopColor="#3568dc" /></linearGradient></defs>
            <rect width="104" height="104" rx="24" fill="#ececec" />
            <circle cx="52" cy="52" r="45" fill="url(#sf)" />
            <circle cx="52" cy="52" r="39" fill="none" stroke="#e6f0fb" strokeWidth="6" strokeDasharray="1 2.400" />
            <path d="M84 25L57 57L48 48Z" fill="#e55a4a" />
            <path d="M22 78L48 48L57 57Z" fill="#f2f2f2" />
          </App104>
        </Tile>
        <Tile dot>
          <App104><rect width="104" height="104" rx="24" fill="#faf7f6" /><ChromeLogo /></App104>
        </Tile>
        <Tile dot>
          <App104>
            <rect width="104" height="104" rx="24" fill="#474747" />
            <path d="M24 35L80 16V34L56 43L80 52V70L24 52Z" fill="#f2a03a" />
            <path d="M80 70L50 61L24 71V88L80 71Z" fill="#f2a03a" />
            <path d="M50 61L80 52V71Z" fill="#dd8a2c" />
          </App104>
        </Tile>
        <Tile>
          <span className="flex h-[104px] w-[104px] items-center justify-center rounded-[24px] bg-[linear-gradient(#8339ab,#562d86)] shadow-[0_2px_3px_rgba(0,0,0,0.3)]">
            <FaGithub className="h-[88px] w-[88px] text-[#f2f1f8]" />
          </span>
        </Tile>
        <Tile>
          <App104>
            <path d="M26 0H104V80L80 104H0V25Z" fill="#f8f8fa" />
            <path d="M28 7H97V76L77 97H7V28Z" fill="#3470e8" />
            <path d="M72 30H56C42 30 33 38 33 50S42 70 56 70H72" fill="none" stroke="#f4f6fb" strokeWidth="8" />
          </App104>
        </Tile>
        <Tile>
          <App104>
            <rect width="104" height="104" rx="24" fill="#fff" />
            <path d="M19 24H92V93H19Z" fill="#873f14" />
            <path d="M13 18L25 11V69L13 76Z" fill="#f09858" />
            <path d="M25 11H83Q86 11 86 14V69H25Z" fill="#ee752f" />
            <text x="43" y="55" fontFamily="Liberation Sans, sans-serif" fontWeight="700" fontSize="44" fill="#fff">F</text>
            <text x="38" y="87" fontFamily="Liberation Sans, sans-serif" fontWeight="700" fontSize="19" fill="#fff">360</text>
          </App104>
        </Tile>
      </div>
      <span className="ml-[48px] h-[118px] w-[2px] bg-black/35" />
      <div className="ml-[44px] flex gap-8">
        <Tile>
          <span className="flex h-[104px] w-[104px] items-center justify-center rounded-[24px] bg-[#458ee6] shadow-[0_2px_3px_rgba(0,0,0,0.3)]">
            <FaDocker className="h-[86px] w-[78px] text-white" />
          </span>
        </Tile>
        <Tile>
          <App104>
            <path d="M9 92H31V112L20 105L9 112Z" fill="#d34a3c" />
            <rect width="104" height="104" rx="22" fill="#7c2c2a" />
            <rect x="5" y="0" width="99" height="101" rx="20" fill="#a24743" />
            <text x="20" y="68" fontFamily="Liberation Serif, serif" fontSize="58" fill="#f7eeee">Aa</text>
          </App104>
        </Tile>
        <Tile>
          <App104>
            <rect width="104" height="104" rx="24" fill="#f1f1f1" />
            <clipPath id="pv"><rect x="8" y="8" width="88" height="88" rx="16" /></clipPath>
            <g clipPath="url(#pv)">
              <rect width="104" height="60" fill="#9dbbe6" />
              <rect y="55" width="104" height="50" fill="#2b3f7c" />
              <path d="M0 68C14 62 22 76 34 70S48 80 56 76L60 104H0Z" fill="#4c62a0" />
              <path d="M0 70C8 66 12 76 22 74S34 84 52 80L56 96H0Z" fill="#e6ebf2" />
              <path d="M0 84C10 80 20 92 32 88S44 96 50 96V104H0Z" fill="#6f6354" />
            </g>
            <path d="M56 70L45 100Q45 108 54 109H98Q107 108 107 100L98 70Z" fill="#a9aeb2" stroke="#4a4d50" strokeWidth="2" />
            <path d="M60 74L52 99Q60 106 76 106T101 99L93 74Z" fill="#e2e5e7" />
            <path d="M68 78l9-4 7 7-6 4zM60 92l6-7 6 4-3 6zM78 92l8-6 5 7-7 3z" fill="#6f737c" />
            <rect x="53" y="51" width="48" height="22" rx="5" fill="#17181a" />
            <ellipse cx="77" cy="54" rx="21" ry="3" fill="#3a3b3e" />
          </App104>
        </Tile>
      </div>
      <span className="ml-[44px] h-[118px] w-[2px] bg-black/35" />
      <div className="relative ml-[39px] mt-[19px] flex h-[66px] w-[120px] flex-col bg-white">
        <span className="h-[4px] bg-[#d5d8dd]" />
        <span className="mx-1 mt-[3px] h-[2px] bg-[#b9bcc2]" />
        <span className="mx-1 mt-[3px] h-[2px] w-3 bg-[#5b8def]" />
        <span className="mx-1 mt-[3px] h-[1px] bg-[#b9c4dc]" />
        <div className="flex flex-1 justify-center bg-[#f6f8fb] pt-1">
          <div className="flex w-[70px] flex-col bg-white pl-3 pr-2 pt-[6px]">
            <span className="h-[2px] w-5 bg-[#777]" />
            <span className="h-9 w-full bg-[repeating-linear-gradient(180deg,#9fb8ea_0_3px,#c8d7f4_3px_4px)]" />
          </div>
        </div>
        <svg className="absolute left-[79px] top-[53px] h-[38px] w-[38px]" viewBox="0 0 104 104"><rect width="104" height="104" rx="24" fill="#faf7f6" /><ChromeLogo /></svg>
      </div>
      <svg className="-mt-[9px] ml-[31px] h-[120px] w-[92px]" viewBox="0 0 92 120">
        <defs><linearGradient id="tr" x1="0" y1="0" x2="1" y2="0"><stop offset="0" stopColor="#cfcac9" /><stop offset=".35" stopColor="#efedec" /><stop offset=".8" stopColor="#dedbda" /><stop offset="1" stopColor="#bdb6b5" /></linearGradient></defs>
        <path d="M1 17Q3 29 46 29T91 17L80 110Q78 119 46 119T13 110Z" fill="url(#tr)" />
        <ellipse cx="46" cy="17" rx="45" ry="11" fill="#a99f9e" stroke="#e6e2e1" strokeWidth="1.500" />
        <path d="M6 14L22 5L30 0L44 9L42 26L26 28L12 23Z" fill="#e4e4e3" />
        <path d="M46 24L50 6L57 2L72 12L84 16L74 26L56 28Z" fill="#e0e0df" />
        <path d="M14 13L26 7L22 19ZM54 9L64 15L56 22ZM70 16L78 18L70 25ZM20 27L28 19L32 28Z" fill="#4b4f58" />
        <path d="M30 15L42 11L40 19Z" fill="#4fb6e6" /><path d="M30 18L38 20L32 26Z" fill="#8a4538" />
        <path d="M58 13L66 15L60 20Z" fill="#3e6bb0" />
        <path d="M34 54Q50 50 60 38Q56 58 40 58Z" fill="#fff" opacity=".7" />
      </svg>
    </div>
  );
}

export default function App() {
  return (
    <main className="relative flex h-[1800px] w-[2880px] flex-col overflow-hidden bg-[linear-gradient(90deg,#04101e_0%,#06131f_20%,#2b0518_24%,#340f22_45%,#2a0418_55%,#3b1030_70%,#4c1628_85%,#8c2a17_98%)] font-[Inter,Roboto,sans-serif]">
      <MenuBar />
      <div className="h-[2px] shrink-0 bg-[linear-gradient(90deg,#04152b_0,#04152b_634px,#b5722c_634px,#b5722c_720px,#1a0a0c_720px,#1a0a0c_80%,#04101e_100%)]" />
      <div className="relative flex h-[1580px] shrink-0 flex-col overflow-hidden rounded-[20px] bg-white">
        <TabStrip />
        <AddressBar />
        <Bookmarks />
        <StudioHeader />
        <div className="flex min-h-0 flex-1 font-[Open_Sans,Noto_Sans,sans-serif]">
          <Sidebar />
          <div className="flex min-w-0 flex-1 flex-col">
            <Breadcrumb />
            <div className="flex min-h-0 flex-1">
              <Outline />
              <div className="flex min-w-0 flex-1 flex-col">
                <CommandBar />
                <TitleBar />
                <Canvas />
              </div>
            </div>
          </div>
        </div>
        <span className="pointer-events-none absolute bottom-0 left-0 h-[110px] w-full bg-[linear-gradient(180deg,transparent,rgba(0,0,0,0.12))] [mask-image:linear-gradient(90deg,transparent_2%,#000_10%,#000_90%,transparent_99%)]" />
      </div>
      <Dock />
    </main>
  );
}
